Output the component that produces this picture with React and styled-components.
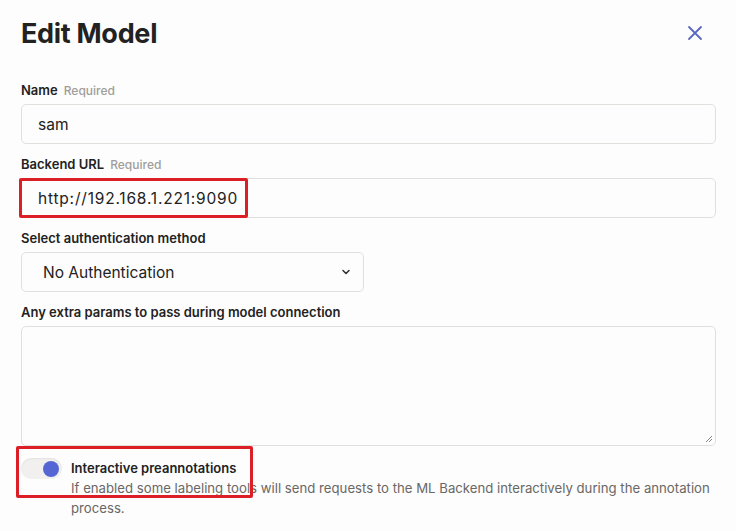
import styled, { createGlobalStyle } from 'styled-components'

const GlobalStyle = createGlobalStyle`
  * { box-sizing: border-box; }
  body {
    margin: 0;
    background: #fdfdfd;
    font-family: Inter, "Noto Sans", sans-serif;
    color: #1f1f1f;
  }
`

const Modal = styled.div`
  width: 736px;
  height: 531px;
  overflow: hidden;
  padding: 14px 20px 0 21px;
`

const Header = styled.div`
  display: flex;
  justify-content: space-between;
  align-items: center;
  height: 38px;
  margin-bottom: 28px;
`

const Title = styled.h1`
  margin: 0;
  font-size: 27px;
  font-weight: 700;
  letter-spacing: -0.3px;
  color: #222;
`

const CloseButton = styled.button`
  border: none;
  background: none;
  padding: 0;
  margin-right: 13px;
  display: flex;
  color: #5a67c2;
  cursor: pointer;
`

const Form = styled.div`
  display: flex;
  flex-direction: column;
  gap: 10px;
`

const Field = styled.div`
  display: flex;
  flex-direction: column;
  gap: 4px;
`

const Label = styled.div`
  display: flex;
  align-items: baseline;
  gap: 6px;
  height: 20px;
  line-height: 20px;
  font-size: 13px;
  font-weight: 600;
  color: #222;
`

const Required = styled.span`
  font-size: 12px;
  font-weight: 500;
  color: #a09d9a;
`

const InputWrap = styled.div`
  position: relative;
  width: ${p => p.$width || '100%'};
`

const Input = styled.div`
  height: 40px;
  display: flex;
  align-items: center;
  padding: 0 ${p => p.$pad || 16}px;
  border: 1px solid #e2e0dd;
  border-radius: 5px;
  background: #fdfdfd;
  font-size: 15.5px;
  letter-spacing: ${p => p.$spacing || 0}px;
  color: #222;
`

const Chevron = styled.svg`
  margin-left: auto;
  margin-right: -10px;
`

const TextArea = styled.div`
  position: relative;
  height: 120px;
  border: 1px solid #e2e0dd;
  border-radius: 5px;
  background: #fdfdfd;
`

const Grip = styled.svg`
  position: absolute;
  right: 2px;
  bottom: 2px;
`

const Highlight = styled.div`
  position: absolute;
  border: 3px solid #dc1f26;
  border-radius: 2px;
  pointer-events: none;
  left: ${p => p.$left}px;
  top: ${p => p.$top}px;
  width: ${p => p.$w}px;
  height: ${p => p.$h}px;
`

const ToggleRow = styled.div`
  position: relative;
  display: flex;
  gap: 9px;
  margin-top: 2px;
`

const Track = styled.div`
  flex: none;
  width: 41px;
  height: 21px;
  border-radius: 11px;
  background: #f1f0ef;
  box-shadow: inset 0 1px 2px rgba(0, 0, 0, 0.06);
  display: flex;
  align-items: center;
  justify-content: flex-end;
  padding-right: 3px;
`

const Knob = styled.div`
  width: 16px;
  height: 16px;
  border-radius: 50%;
  background: #5566d4;
`

const ToggleText = styled.div`
  flex: 1;
  display: flex;
  flex-direction: column;
`

const ToggleTitle = styled.div`
  font-size: 13px;
  font-weight: 600;
  line-height: 20px;
  color: #222;
`

const Description = styled.div`
  font-size: 13.2px;
  line-height: 20px;
  color: #6a6764;
`

export default function App() {
  return (
    <>
      <GlobalStyle />
      <Modal>
        <Header>
          <Title>Edit Model</Title>
          <CloseButton aria-label="Close">
            <svg width="16" height="16" viewBox="0 0 16 16">
              <path d="M2 2L14 14M14 2L2 14" stroke="currentColor" strokeWidth="1.8" strokeLinecap="round" />
            </svg>
          </CloseButton>
        </Header>

        <Form>
          <Field>
            <Label>Name <Required>Required</Required></Label>
            <Input>sam</Input>
          </Field>

          <Field>
            <Label>Backend URL <Required>Required</Required></Label>
            <InputWrap>
              <Input $spacing={0.8}>http://192.168.1.221:9090</Input>
              <Highlight $left={-2} $top={0} $w={229} $h={40} />
            </InputWrap>
          </Field>

          <Field>
            <Label>Select authentication method</Label>
            <InputWrap $width="343px">
              <Input $pad={21}>
                No Authentication
                <Chevron width="12" height="12" viewBox="0 0 12 12">
                  <path d="M3 4.5L6 7.5L9 4.5" fill="none" stroke="#333" strokeWidth="1.6" strokeLinecap="round" strokeLinejoin="round" />
                </Chevron>
              </Input>
            </InputWrap>
          </Field>

          <Field>
            <Label>Any extra params to pass during model connection</Label>
            <TextArea>
              <Grip width="8" height="8" viewBox="0 0 8 8">
                <path d="M7 1L1 7M7 4L4 7" stroke="#888" strokeWidth="1" />
              </Grip>
            </TextArea>
          </Field>

          <ToggleRow>
            <Track><Knob /></Track>
            <ToggleText>
              <ToggleTitle>Interactive preannotations</ToggleTitle>
              <Description>
                If enabled some labeling tools will send requests to the ML Backend interactively during the annotation process.
              </Description>
            </ToggleText>
            <Highlight $left={-5} $top={-12} $w={237} $h={52} />
          </ToggleRow>
        </Form>
      </Modal>
    </>
  )
}
